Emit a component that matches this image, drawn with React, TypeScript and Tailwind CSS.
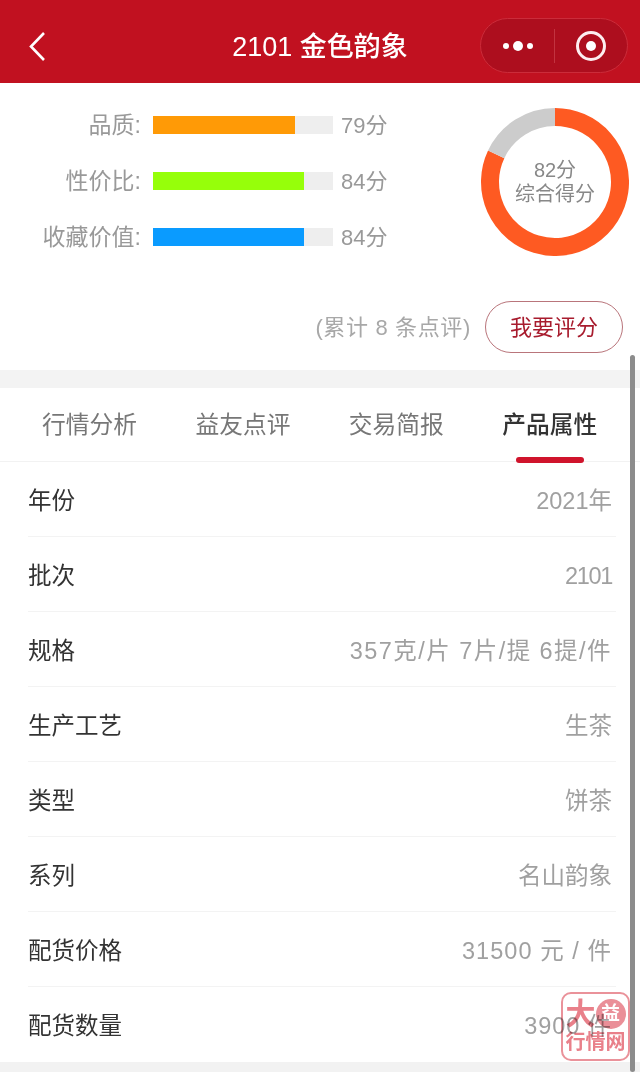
const font = "font-['Liberation_Sans','Noto_Sans_CJK_SC',sans-serif]";

const scores = [
  { label: "品质:", value: "79分", width: "w-[142px]", color: "bg-[#ff9a06]" },
  { label: "性价比:", value: "84分", width: "w-[151px]", color: "bg-[#96ff0a]" },
  { label: "收藏价值:", value: "84分", width: "w-[151px]", color: "bg-[#0a9bff]" },
];

const tabs = ["行情分析", "益友点评", "交易简报", "产品属性"];

const rows = [
  { label: "年份", value: "2021年", spacing: "" },
  { label: "批次", value: "2101", spacing: "tracking-[-1.3px]" },
  { label: "规格", value: "357克/片 7片/提 6提/件", spacing: "tracking-[1.45px]" },
  { label: "生产工艺", value: "生茶", spacing: "" },
  { label: "类型", value: "饼茶", spacing: "" },
  { label: "系列", value: "名山韵象", spacing: "" },
  { label: "配货价格", value: "31500 元 / 件", spacing: "tracking-[1.05px]" },
  { label: "配货数量", value: "3900 件", spacing: "tracking-[0.9px]" },
];

function Donut() {
  return (
    <div className="relative size-[148px]">
      <svg viewBox="0 0 148 148" className="size-full" fill="none" strokeWidth="18">
        <path d="M74 9 A65 65 0 1 1 15.2 46.3" stroke="#fe5a22" />
        <path d="M74 9 A65 65 0 0 0 15.2 46.3" stroke="#cccccc" />
      </svg>
      <div className="absolute inset-0 flex flex-col items-center justify-center text-[20px] leading-[24px] text-[#888]">
        <span>82分</span>
        <span>综合得分</span>
      </div>
    </div>
  );
}

function Watermark() {
  return (
    <div className="absolute left-[561px] top-[992px] flex h-[69px] w-[69px] flex-col items-center rounded-[10px] border-2 border-[#ea929a] mix-blend-multiply">
      <div className="mt-[4px] flex h-[32px] w-[60px] items-center">
        <span className="w-[30px] text-[30px] font-bold leading-[32px] text-[#e9808a]">大</span>
        <span className="flex size-[30px] items-center justify-center rounded-full bg-[#ea8f98] text-[19px] font-bold leading-[30px] text-white">
          益
        </span>
      </div>
      <span className="mt-[1px] text-[20px] font-bold leading-[22px] text-[#e9808a]">行情网</span>
    </div>
  );
}

export default function App() {
  return (
    <div className={`relative h-[1072px] w-[640px] overflow-hidden bg-white ${font}`}>
      <header className="relative flex h-[83px] items-center justify-center bg-[#c11120] pt-[11px] text-white">
        <svg viewBox="0 0 20 30" className="absolute left-[27px] top-[31px] h-[30px] w-[20px]" fill="none" stroke="white" strokeWidth="2.6">
          <path d="M17 2 L4 15.5 L17 29" />
        </svg>
        <h1 className="text-[27px] font-medium">2101 金色韵象</h1>
        <div className="absolute left-[480px] top-[18px] flex h-[55px] w-[148px] items-center rounded-full border border-[#cb2c3a] bg-[#ad0e1e]">
          <div className="flex h-[34px] w-[74px] items-center justify-center gap-[4px] border-r border-[#c23340]">
            <span className="size-[6px] rounded-full bg-white" />
            <span className="size-[10px] rounded-full bg-white" />
            <span className="size-[6px] rounded-full bg-white" />
          </div>
          <div className="flex flex-1 items-center justify-center">
            <span className="flex size-[30px] items-center justify-center rounded-full border-[3px] border-[#fdeef0]">
              <span className="size-[10px] rounded-full bg-white" />
            </span>
          </div>
        </div>
      </header>

      <section className="h-[287px]">
        <div className="flex justify-between pr-[11px] pt-[25px]">
          <div className="flex flex-col gap-[32px] pt-[5px]">
            {scores.map((s) => (
              <div key={s.label} className="flex h-[24px] items-center text-[22px] text-[#999]">
                <span className="w-[141px] text-right text-[23px]">{s.label}</span>
                <div className="ml-[12px] h-[18px] w-[180px] bg-[#eeeeee]">
                  <div className={`h-full ${s.width} ${s.color}`} />
                </div>
                <span className="ml-[8px]">{s.value}</span>
              </div>
            ))}
          </div>
          <Donut />
        </div>
        <div className="mt-[45px] flex items-center justify-end gap-[14px] pr-[17px]">
          <span className="text-[22px] tracking-[0.65px] text-[#a8a8a8]">(累计 8 条点评)</span>
          <button className="h-[52px] w-[138px] rounded-full border border-[#b9757b] text-[22px] text-[#a81c2e]">
            我要评分
          </button>
        </div>
      </section>

      <div className="h-[18px] bg-[#f3f3f3]" />

      <nav className="flex h-[74px] items-center border-b border-[#f2f2f2] pl-[42px] text-[23.75px] text-[#777]">
        <div className="flex gap-[58.4px]">
          {tabs.map((t, i) => (
            <span key={t} className={i === 3 ? "relative font-medium text-[#333]" : ""}>
              {t}
              {i === 3 && <span className="absolute left-[14px] top-[50px] h-[6px] w-[68px] rounded-full bg-[#d0142c]" />}
            </span>
          ))}
        </div>
      </nav>

      <div className="pl-[28px] pr-[24px]">
        {rows.map((row, i) => (
          <div
            key={row.label}
            className={`flex h-[75px] items-center justify-between pt-[5px] text-[23.5px] ${i < rows.length - 1 ? "border-b border-[#f3f3f3]" : ""}`}
          >
            <span className="text-[#333]">{row.label}</span>
            <span className={`pr-[4px] text-[#a0a0a0] ${row.spacing}`}>{row.value}</span>
          </div>
        ))}
      </div>
      <div className="h-[10px] bg-[#f2f2f2]" />

      <div className="absolute left-[630px] top-[355px] h-[717px] w-[5px] rounded-full bg-[#8c8c8c]" />
      <Watermark />
    </div>
  );
}
